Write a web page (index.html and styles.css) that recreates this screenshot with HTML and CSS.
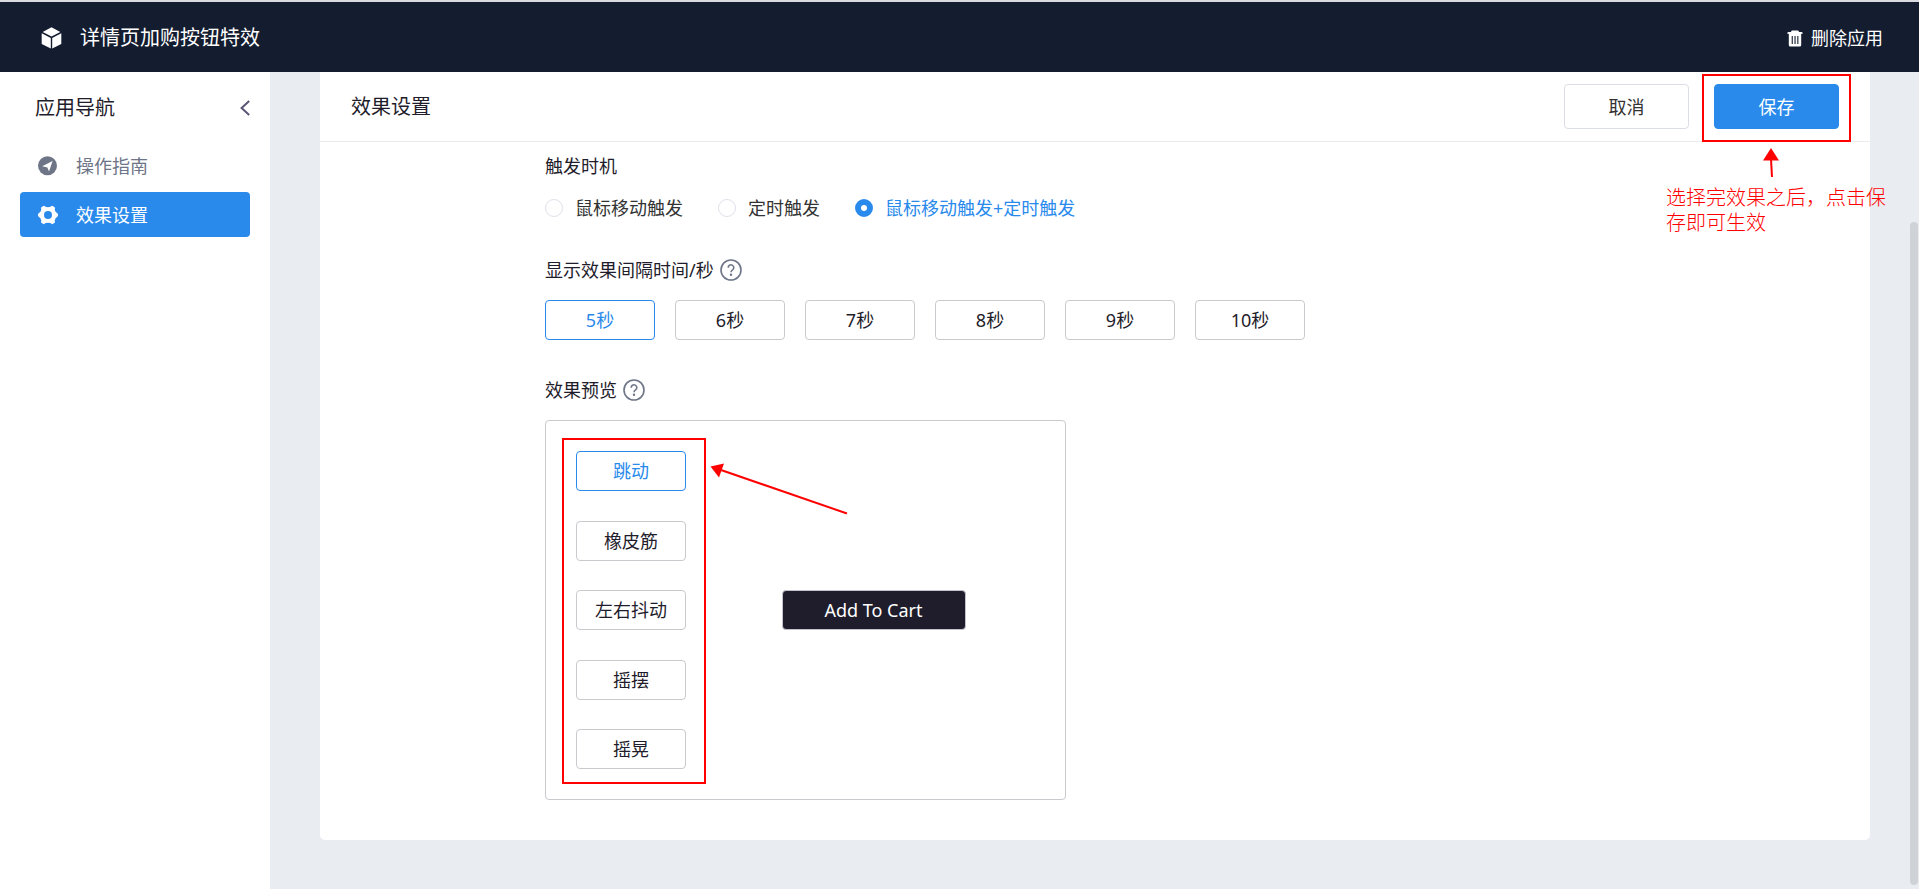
FILE: index.html
```html
<!DOCTYPE html>
<html lang="zh-CN">
<head>
<meta charset="utf-8">
<meta name="viewport" content="width=device-width, initial-scale=1">
<title>详情页加购按钮特效</title>
<link rel="stylesheet" href="styles.css">
</head>
<body>
<div class="app">
  <header class="topbar">
    <svg class="topbar-logo" viewBox="0 0 20 22" aria-hidden="true">
      <path d="M10 0.3 18.8 4.9 10 9.6 1.2 4.9Z"/>
      <path d="M0.2 6.2 9.3 11V21.6L0.2 16.9Z"/>
      <path d="M19.8 6.2 10.7 11V21.6L19.8 16.9Z"/>
    </svg>
    <h1 class="topbar-title">详情页加购按钮特效</h1>
    <button class="topbar-delete" type="button">
      <svg class="topbar-trash" viewBox="0 0 16 17" aria-hidden="true">
        <path fill-rule="evenodd" d="M5 0.5h6q0.8 0 1 1.5h2.6q1.2 0 1.2 1.8H14.2V15q0 1.5-1.5 1.5H3.3q-1.5 0-1.5-1.5V3.8H0.2Q0.2 2 1.4 2H4q0.2-1.5 1-1.5zM4.7 6V14H5.8V6zM7.5 6V14H8.6V6zM10.3 6V14H11.4V6z"/>
      </svg>
      删除应用
    </button>
  </header>

  <div class="body">
    <aside class="sidebar">
      <div class="sidebar-head">
        <h2 class="sidebar-title">应用导航</h2>
        <button class="sidebar-toggle" type="button" aria-label="收起导航">
          <svg class="chevron" viewBox="0 0 11 16" aria-hidden="true"><path d="M10.2 1 2.6 8l7.6 7"/></svg>
        </button>
      </div>
      <nav class="nav">
        <a class="nav-item" href="#">
          <svg class="nav-icon" viewBox="0 0 20 20" aria-hidden="true">
            <circle cx="9.5" cy="9.8" r="9.5"/>
            <path class="nav-icon-cut" d="M14.6 5 11 15.4 9.4 11.6 4.2 10.2Z"/>
          </svg>
          操作指南
        </a>
        <a class="nav-item nav-item-active" href="#" aria-current="page">
          <svg class="nav-icon" viewBox="0 0 20 20" aria-hidden="true">
            <path fill-rule="evenodd" d="M5.8 0.8Q7.4 2.2 10 2.2T14.2 0.8L17 2.6Q16.4 4.6 17.4 6.6L20 9V11L17.4 13.4Q16.4 15.4 17 17.4L14.2 19.2Q12.6 17.8 10 17.8T5.8 19.2L3 17.4Q3.6 15.4 2.6 13.4L0 11V9L2.6 6.6Q3.6 4.6 3 2.6ZM10 6a4 4 0 1 0 0 8 4 4 0 0 0 0-8Z"/>
          </svg>
          效果设置
        </a>
      </nav>
    </aside>

    <main class="main">
      <section class="card">
        <div class="card-head">
          <h2 class="card-title">效果设置</h2>
          <button class="btn" type="button">取消</button>
          <div class="save">
            <button class="btn btn-primary" type="button">保存</button>
            <div class="mark mark-save"></div>
            <svg class="mark-arrow-up" viewBox="0 0 18 30" aria-hidden="true">
              <path d="M9 0 17 12.5H1Z"/><path class="shaft" d="M9 11 10 29"/>
            </svg>
            <p class="mark-note">选择完效果之后，点击保存即可生效</p>
          </div>
        </div>

        <div class="form">
          <fieldset class="group">
            <legend class="label">触发时机</legend>
            <div class="radios">
              <label class="radio"><input type="radio" name="trigger">鼠标移动触发</label>
              <label class="radio"><input type="radio" name="trigger">定时触发</label>
              <label class="radio"><input type="radio" name="trigger" checked>鼠标移动触发+定时触发</label>
            </div>
          </fieldset>

          <div class="group">
            <div class="label">显示效果间隔时间/秒
              <svg class="help" viewBox="0 0 22 22" aria-hidden="true">
                <circle cx="11" cy="11" r="10"/>
                <path d="M8.2 8.7a2.8 2.8 0 1 1 4.4 2.2c-1.1 0.8-1.6 1.2-1.6 2.3"/>
                <circle class="help-dot" cx="11" cy="15.7" r="1.2"/>
              </svg>
            </div>
            <div class="options">
              <button class="option option-on" type="button" aria-pressed="true">5秒</button>
              <button class="option" type="button">6秒</button>
              <button class="option" type="button">7秒</button>
              <button class="option" type="button">8秒</button>
              <button class="option" type="button">9秒</button>
              <button class="option" type="button">10秒</button>
            </div>
          </div>

          <div class="group">
            <div class="label">效果预览
              <svg class="help" viewBox="0 0 22 22" aria-hidden="true">
                <circle cx="11" cy="11" r="10"/>
                <path d="M8.2 8.7a2.8 2.8 0 1 1 4.4 2.2c-1.1 0.8-1.6 1.2-1.6 2.3"/>
                <circle class="help-dot" cx="11" cy="15.7" r="1.2"/>
              </svg>
            </div>
            <div class="preview">
              <div class="effects">
                <button class="option option-on" type="button" aria-pressed="true">跳动</button>
                <button class="option" type="button">橡皮筋</button>
                <button class="option" type="button">左右抖动</button>
                <button class="option" type="button">摇摆</button>
                <button class="option" type="button">摇晃</button>
                <div class="mark mark-effects"></div>
                <svg class="mark-arrow-left" viewBox="0 0 138 52" aria-hidden="true">
                  <path d="M0.5 3.5 14 0.5 9 14.5Z"/><path class="shaft" d="M11 7 137 50.5"/>
                </svg>
              </div>
              <div class="stage">
                <button class="cart" type="button">Add To Cart</button>
              </div>
            </div>
          </div>
        </div>
      </section>
      <div class="scroll-thumb"></div>
    </main>
  </div>
</div>
</body>
</html>
```

FILE: styles.css
```css
:root {
  --navy: #141c30;
  --blue: #298aec;
  --ink: #1f1d2b;
  --muted: #6d7587;
  --line: #c9cacd;
  --red: #ff0000;
}

* {
  box-sizing: border-box;
}

body {
  margin: 0;
  color: var(--ink);
  font-family: "Noto Sans", "Noto Sans CJK SC", sans-serif;
  font-size: 18px;
  line-height: 24px;
}

h1,
h2,
p {
  margin: 0;
  font-size: 20px;
  font-weight: 400;
}

button,
input {
  margin: 0;
  font: inherit;
  color: inherit;
}

button {
  padding: 0;
  border: 0;
  background: none;
  cursor: pointer;
}

.app {
  display: flex;
  flex-direction: column;
  height: 100vh;
  overflow: hidden;
}

.topbar {
  flex: none;
  display: flex;
  align-items: center;
  height: 72px;
  padding: 2px 36px 0 41px;
  border-top: 2px solid #d9dbe0;
  background: var(--navy);
  color: #fff;
}

.topbar-logo {
  width: 21px;
  height: 22px;
  margin-right: 18px;
  fill: currentColor;
}

.topbar-title {
  flex: 1;
}

.topbar-delete {
  display: flex;
  align-items: center;
  gap: 8px;
}

.topbar-trash {
  width: 16px;
  height: 17px;
  fill: currentColor;
}

.body {
  flex: 1;
  min-height: 0;
  display: flex;
}

.sidebar {
  flex: none;
  width: 270px;
  padding: 0 20px;
  background: #fff;
}

.sidebar-head {
  display: flex;
  align-items: center;
  justify-content: space-between;
  height: 71px;
  padding-left: 15px;
}

.sidebar-toggle {
  display: flex;
}

.chevron {
  width: 11px;
  height: 16px;
  fill: none;
  stroke: #5b5675;
  stroke-width: 2;
}

.nav {
  display: flex;
  flex-direction: column;
  gap: 4px;
}

.nav-item {
  display: flex;
  align-items: center;
  gap: 18px;
  height: 45px;
  padding-left: 18px;
  border-radius: 4px;
  color: var(--muted);
  text-decoration: none;
}

.nav-item-active {
  background: var(--blue);
  color: #fff;
}

.nav-icon {
  width: 20px;
  height: 20px;
  fill: currentColor;
}

.nav-icon-cut {
  fill: #fff;
}

.main {
  position: relative;
  flex: 1;
  min-width: 0;
  padding: 0 49px 48px 50px;
  background: #e9edf2;
}

.card {
  border-radius: 0 0 5px 5px;
  background: #fff;
}

.card-head {
  display: flex;
  align-items: center;
  gap: 25px;
  height: 70px;
  padding: 0 31px;
  border-bottom: 1px solid #ebecee;
}

.card-title {
  flex: 1;
}

.btn {
  width: 125px;
  height: 45px;
  border: 1px solid #dcdee6;
  border-radius: 4px;
  color: #333;
}

.btn-primary {
  border-color: var(--blue);
  background: var(--blue);
  color: #fff;
}

.save,
.effects {
  position: relative;
}

.mark {
  position: absolute;
  border: 2px solid var(--red);
  pointer-events: none;
}

.mark-save {
  inset: -10px -12px -13px -12px;
}

.mark-arrow-up,
.mark-arrow-left {
  position: absolute;
  fill: var(--red);
}

.shaft {
  stroke: var(--red);
  stroke-width: 2;
}

.mark-arrow-up {
  top: 64px;
  left: 48px;
  width: 18px;
  height: 30px;
}

.mark-note {
  position: absolute;
  top: 101px;
  left: -48px;
  width: 224px;
  color: var(--red);
  font-weight: 300;
  line-height: 25px;
}

.form {
  display: flex;
  flex-direction: column;
  gap: 38px;
  padding: 12px 225px 40px;
}

.group {
  min-width: 0;
  margin: 0;
  padding: 0;
  border: 0;
}

.label {
  display: flex;
  align-items: center;
  gap: 6px;
  margin-bottom: 18px;
  padding: 0;
}

.radios {
  display: flex;
  flex-wrap: wrap;
  gap: 35px;
}

.radio {
  display: flex;
  align-items: center;
  gap: 12px;
  color: #333;
}

.radio:has(:checked) {
  color: var(--blue);
}

.radio input {
  appearance: none;
  width: 18px;
  height: 18px;
  border: 1px solid #dfe0e9;
  border-radius: 50%;
  background: #fff;
}

.radio input:checked {
  border: 6px solid var(--blue);
}

.help {
  width: 22px;
  height: 22px;
  fill: none;
  stroke: var(--muted);
  stroke-width: 1.6;
}

.help-dot {
  fill: var(--muted);
  stroke: none;
}

.options {
  display: flex;
  flex-wrap: wrap;
  gap: 20px;
}

.option {
  width: 110px;
  height: 40px;
  border: 1px solid var(--line);
  border-radius: 4px;
  background: #fff;
}

.option-on {
  border-color: var(--blue);
  color: var(--blue);
}

.preview {
  display: flex;
  max-width: 521px;
  min-height: 380px;
  padding: 30px 4px 30px 30px;
  border: 1px solid var(--line);
  border-radius: 4px;
}

.effects {
  display: flex;
  flex-direction: column;
  justify-content: space-between;
}

.mark-effects {
  inset: -13px -20px -15px -14px;
}

.mark-arrow-left {
  top: 12px;
  left: 134px;
  width: 138px;
  height: 52px;
}

.stage {
  flex: 1;
  display: flex;
  align-items: center;
  justify-content: center;
}

.cart {
  width: 184px;
  height: 40px;
  border: 1px solid #c3c3cf;
  border-radius: 4px;
  background: var(--ink);
  color: #fff;
}

.scroll-thumb {
  position: absolute;
  top: 150px;
  right: 1px;
  bottom: 4px;
  width: 8px;
  border-radius: 4px;
  background: #cfd2d7;
}
```
